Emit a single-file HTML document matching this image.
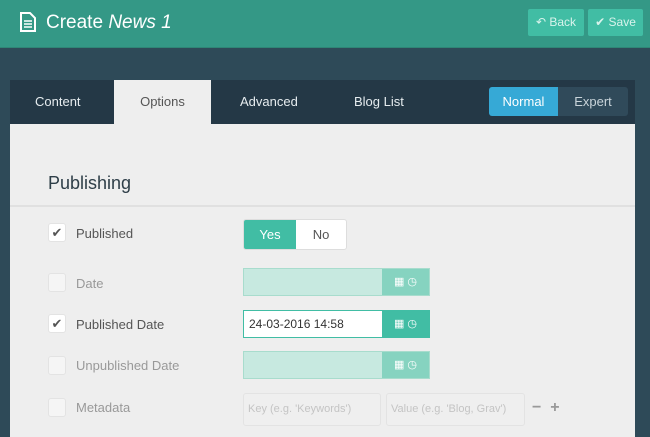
<!DOCTYPE html><html><head><style>
*{margin:0;padding:0;box-sizing:border-box}
body{width:650px;height:437px;overflow:hidden;background:#2e4a58;font-family:"Liberation Sans",sans-serif;position:relative}
.hdr{position:absolute;left:0;top:0;width:650px;height:48px;background:#349886;border-bottom:1px solid #2f8676}
.hdr h1{position:absolute;left:46px;top:12px;color:#fff;font-size:19px;font-weight:normal}
.btn{position:absolute;top:9px;height:27px;background:#41bda4;color:#d9f3ec;font-size:12px;line-height:27px;border-radius:2px;text-align:center}
.tabs{position:absolute;left:10px;top:80px;width:625px;height:44px;background:#243846}
.tab{position:absolute;top:0;height:44px;line-height:44px;color:#e6ecef;font-size:13px}
.content{position:absolute;left:10px;top:124px;width:625px;height:313px;background:#eeeeee}
.lbl{position:absolute;left:76px;font-size:13px;color:#555}
.lbl.off{color:#999}
.cb{position:absolute;left:48px;width:18px;height:19px;background:#fff;border:1px solid #e3e3e3;border-radius:3px;color:#555;font-size:13px;line-height:17px;text-align:center}
.cb.off{background:#f5f5f5}
.inp{position:absolute;left:243px;width:187px;height:28px;background:#c7e9e0;border:1px solid #a8dccd}
.inp .ic{position:absolute;right:0;top:0;width:47px;height:26px;background:#86d3c0;color:#fff;font-size:11px;line-height:26px;text-align:center}
</style></head><body>
<div class="hdr">
<svg style="position:absolute;left:20px;top:12px" width="16" height="20" viewBox="0 0 16 20"><path d="M1 1h9l5 5v13H1z" fill="none" stroke="#fff" stroke-width="2"/><path d="M4 9h8M4 12h8M4 15h8" stroke="#fff" stroke-width="1.5"/></svg>
<h1>Create <i>News 1</i></h1>
<div class="btn" style="left:528px;width:56px">&#8630; Back</div>
<div class="btn" style="left:588px;width:55px">&#10004; Save</div>
</div>
<div class="tabs">
<div class="tab" style="left:25px">Content</div>
<div class="tab" style="left:104px;width:97px;background:#eeeeee;color:#555;text-align:center">Options</div>
<div class="tab" style="left:230px">Advanced</div>
<div class="tab" style="left:344px">Blog List</div>
<div style="position:absolute;left:479px;top:7px;width:69px;height:29px;background:#36a9d6;color:#fff;font-size:13px;line-height:29px;text-align:center;border-radius:3px 0 0 3px">Normal</div>
<div style="position:absolute;left:548px;top:7px;width:70px;height:29px;background:#304a5a;color:#c9d4da;font-size:13px;line-height:29px;text-align:center;border-radius:0 3px 3px 0">Expert</div>
</div>
<div class="content">
<div style="position:absolute;left:38px;top:49px;font-size:18px;color:#2e3e48">Publishing</div>
<div style="position:absolute;left:0;top:81px;width:625px;height:2px;background:#e0e0e0"></div>
</div>
<div class="cb" style="top:223px">&#10004;</div><div class="lbl" style="top:226px">Published</div>
<div style="position:absolute;left:243px;top:219px;width:104px;height:31px;background:#fff;border:1px solid #ddd;border-radius:3px;overflow:hidden;font-size:13px">
<div style="position:absolute;left:0;top:0;width:52px;height:29px;background:#41bda4;color:#fff;text-align:center;line-height:29px">Yes</div>
<div style="position:absolute;left:52px;top:0;width:50px;height:29px;color:#555;text-align:center;line-height:29px">No</div></div>
<div class="cb off" style="top:273px"></div><div class="lbl off" style="top:276px">Date</div>
<div class="inp" style="top:268px"><div class="ic">&#9638; &#9719;</div></div>
<div class="cb" style="top:314px">&#10004;</div><div class="lbl" style="top:317px">Published Date</div>
<div class="inp" style="top:310px;background:#fff;border-color:#41bda4"><span style="position:absolute;left:5px;top:6px;font-size:12px;color:#333">24-03-2016 14:58</span><div class="ic" style="background:#41bda4">&#9638; &#9719;</div></div>
<div class="cb off" style="top:356px"></div><div class="lbl off" style="top:358px">Unpublished Date</div>
<div class="inp" style="top:351px"><div class="ic">&#9638; &#9719;</div></div>
<div class="cb off" style="top:398px"></div><div class="lbl off" style="top:400px">Metadata</div>
<div style="position:absolute;left:243px;top:393px;width:138px;height:33px;background:#efefef;border:1px solid #e3e3e3;border-radius:3px;font-size:11px;color:#c4c4c4;padding:9px 4px">Key (e.g. 'Keywords')</div>
<div style="position:absolute;left:386px;top:393px;width:139px;height:33px;background:#efefef;border:1px solid #e3e3e3;border-radius:3px;font-size:11px;color:#c4c4c4;padding:9px 4px">Value (e.g. 'Blog, Grav')</div>
<div style="position:absolute;left:532px;top:399px;font-size:16px;color:#999;font-weight:bold">&minus;&nbsp;&nbsp;+</div>
</body></html>
